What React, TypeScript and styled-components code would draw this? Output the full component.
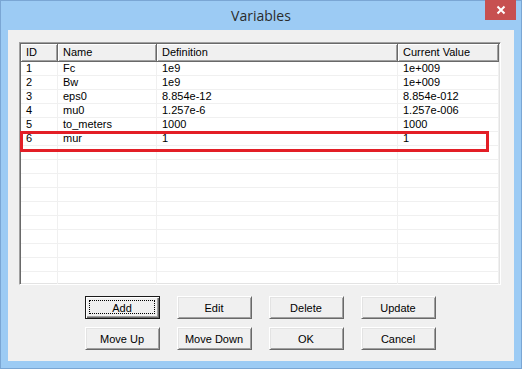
import React from 'react';
import styled, { createGlobalStyle } from 'styled-components';

const GlobalStyle = createGlobalStyle`
  html, body {
    margin: 0;
    padding: 0;
    background: #9ccbf4;
  }
  * {
    box-sizing: border-box;
  }
`;

const Window = styled.div`
  width: 522px;
  height: 369px;
  background: #9ccbf4;
  border: 1px solid #7aa6d4;
  padding: 0 7px 7px 7px;
  display: flex;
  flex-direction: column;
  font-family: 'Liberation Sans', Arial, sans-serif;
  font-size: 11px;
  color: #000;
`;

const TitleBar = styled.div`
  height: 29px;
  display: grid;
  grid-template-columns: 1fr auto 1fr;
  align-items: start;
`;

const Title = styled.div`
  grid-column: 2;
  font-family: 'Open Sans', 'Noto Sans', sans-serif;
  font-size: 14px;
  color: #2b2b2b;
  line-height: 18px;
  padding-top: 6px;
`;

const CloseButton = styled.div`
  grid-column: 3;
  justify-self: end;
  margin-right: -2px;
  width: 31px;
  height: 20px;
  margin-top: -1px;
  background: #c75050;
  display: flex;
  align-items: center;
  justify-content: center;
`;

const Client = styled.div`
  flex: 1;
  background: #f0f0f0;
  padding: 12px 13px 11px 11px;
  display: flex;
  flex-direction: column;
`;

const ListBox = styled.div`
  position: relative;
  height: 243px;
  background: #fff;
  border-style: solid;
  border-width: 1px;
  border-color: #a0a0a0 #fff #fff #a0a0a0;
  box-shadow: inset 1px 1px 0 #696969, inset -1px -1px 0 #e3e3e3;
  padding: 1px;
  overflow: hidden;
`;

const COLS = '37px 99px 241px 101px';

const HeaderRow = styled.div`
  display: grid;
  grid-template-columns: ${COLS};
  height: 18px;
  background: #f0f0f0;
`;

const HeaderCell = styled.div`
  background: #f0f0f0;
  border-right: 1px solid #696969;
  border-bottom: 1px solid #696969;
  box-shadow: inset 1px 1px 0 #fff, inset -1px -1px 0 #a0a0a0;
  padding-left: 5px;
  line-height: 17px;
  white-space: nowrap;
  overflow: hidden;
`;

const Row = styled.div`
  display: grid;
  grid-template-columns: ${COLS};
  height: 14px;
`;

const Cell = styled.div`
  border-right: 1px solid #f0f0f0;
  border-bottom: 1px solid #f0f0f0;
  padding-left: 5px;
  line-height: 13px;
  white-space: nowrap;
  overflow: hidden;
`;

const Highlight = styled.div`
  position: absolute;
  left: 0px;
  top: 88px;
  width: 469px;
  height: 21px;
  border: 3px solid #e31e26;
  pointer-events: none;
`;

const ButtonGrid = styled.div`
  margin-top: 11px;
  display: grid;
  grid-template-columns: repeat(4, 75px);
  grid-auto-rows: 23px;
  column-gap: 17px;
  row-gap: 8px;
  justify-content: center;
`;

const Button = styled.button<{ $default?: boolean }>`
  position: relative;
  width: 75px;
  height: 23px;
  padding: 0;
  background: #f0f0f0;
  font-family: 'Liberation Sans', Arial, sans-serif;
  font-size: 11px;
  color: #000;
  border-style: solid;
  border-width: 1px;
  border-color: ${p => (p.$default ? '#1a1a1a' : '#fff #696969 #696969 #fff')};
  box-shadow: ${p =>
    p.$default
      ? 'inset 1px 1px 0 #fff, inset -1px -1px 0 #696969, inset -2px -2px 0 #a0a0a0'
      : 'inset 1px 1px 0 #e3e3e3, inset -1px -1px 0 #a0a0a0'};
  cursor: default;

  &::after {
    content: '';
    display: ${p => (p.$default ? 'block' : 'none')};
    position: absolute;
    left: 3px;
    top: 3px;
    right: 4px;
    bottom: 4px;
    border: 1px dotted #000;
  }
`;

const rows = [
  ['1', 'Fc', '1e9', '1e+009'],
  ['2', 'Bw', '1e9', '1e+009'],
  ['3', 'eps0', '8.854e-12', '8.854e-012'],
  ['4', 'mu0', '1.257e-6', '1.257e-006'],
  ['5', 'to_meters', '1000', '1000'],
  ['6', 'mur', '1', '1'],
];

const TOTAL_ROWS = 16;

const App: React.FC = () => {
  const filled = [...rows];
  while (filled.length < TOTAL_ROWS) filled.push(['', '', '', '']);

  return (
    <>
      <GlobalStyle />
      <Window>
        <TitleBar>
          <Title>Variables</Title>
          <CloseButton>
            <svg width="10" height="10" viewBox="0 0 10 10">
              <path d="M1.5 1.5 L8.5 8.5 M8.5 1.5 L1.5 8.5" stroke="#fff" strokeWidth="2" />
            </svg>
          </CloseButton>
        </TitleBar>
        <Client>
          <ListBox>
            <HeaderRow>
              <HeaderCell>ID</HeaderCell>
              <HeaderCell>Name</HeaderCell>
              <HeaderCell>Definition</HeaderCell>
              <HeaderCell>Current Value</HeaderCell>
            </HeaderRow>
            {filled.map((r, i) => (
              <Row key={i}>
                {r.map((c, j) => (
                  <Cell key={j}>{c}</Cell>
                ))}
              </Row>
            ))}
            <Highlight />
          </ListBox>
          <ButtonGrid>
            <Button $default>Add</Button>
            <Button>Edit</Button>
            <Button>Delete</Button>
            <Button>Update</Button>
            <Button>Move Up</Button>
            <Button>Move Down</Button>
            <Button>OK</Button>
            <Button>Cancel</Button>
          </ButtonGrid>
        </Client>
      </Window>
    </>
  );
};

export default App;
